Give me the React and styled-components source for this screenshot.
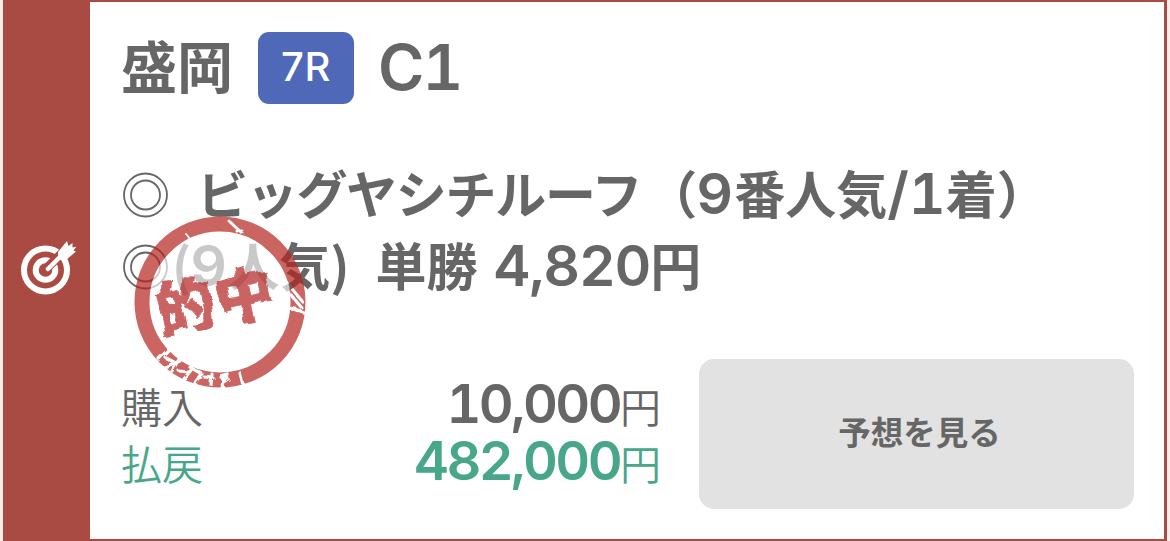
import React from 'react';

import styled, { createGlobalStyle, css } from 'styled-components';

const color = {
    red: '#a94b42',
    blue: '#4f69b8',
    green: '#48a78b',
    text: '#666',
    button: '#e2e2e2',
};

const GlobalStyle = createGlobalStyle`
    * {
        box-sizing: border-box;
    }
    body {
        margin: 0;
        background: #fbeeea;
        overflow: hidden;
        font-family: 'Noto Sans CJK JP', sans-serif;
        color: ${color.text};
    }
`;

const Card = styled.article`
    display: flex;
    width: 1164px;
    height: 541px;
    margin-left: 3px;
    background: #fff;
    border: solid ${color.red};
    border-width: 2px 3px 2px 0;
`;

const Side = styled.div`
    display: flex;
    align-items: center;
    justify-content: center;
    flex: none;
    width: 87px;
    padding: 0 0 7px 2px;
    background: ${color.red};
`;

const Body = styled.div`
    flex: 1;
    padding: 30px 30px 0 31px;
`;

const Title = styled.h2`
    display: flex;
    align-items: center;
    height: 72px;
    margin: 0 0 55px;
    font-size: 56px;
    line-height: 66px;
    font-weight: 700;
`;

const Place = styled.span`
    width: 137px;
    padding-bottom: 9px;
`;

const RaceNo = styled.span`
    width: 96px;
    height: 72px;
    margin-right: 24px;
    border-radius: 11px;
    background: ${color.blue};
    color: #fff;
    font-family: Inter, sans-serif;
    font-size: 40px;
    font-weight: 500;
    line-height: 70px;
    text-align: center;
    letter-spacing: 0.5px;
`;

const latin = css`
    font-family: Inter, 'Noto Sans CJK JP', sans-serif;
    font-weight: 600;
    font-variant-numeric: tabular-nums;
`;

const RaceClass = styled.span`
    ${latin}
    font-size: 63px;
    letter-spacing: -2px;
    padding-bottom: 2px;
`;

const Line = styled.div`
    position: relative;
    display: flex;
    align-items: baseline;
    height: 72px;
    font-size: 51px;
    font-weight: 700;
    line-height: 67px;
    white-space: nowrap;
`;

const Mark = styled.svg`
    align-self: center;
    flex: none;
    width: 47px;
    height: 46px;
`;

const Text = styled.span`
    margin-left: ${props => props.$gap || 0}px;
    letter-spacing: ${props => props.$spacing || 0}px;
`;

const Num = styled.span`
    ${latin}
    font-size: ${props => props.$size || 57}px;
    margin-left: ${props => props.$gap || 0}px;
    letter-spacing: ${props => props.$spacing || 0}px;
`;

const Stamp = styled.svg`
    position: absolute;
    left: 10px;
    top: -18px;
    width: 178px;
    height: 178px;
    font-family: 'Noto Sans CJK JP', sans-serif;
    font-weight: 900;
`;

const Footer = styled.div`
    display: flex;
    justify-content: space-between;
    margin-top: 56px;
`;

const Amounts = styled.dl`
    width: 540px;
    margin: 16px 0 0;
`;

const Amount = styled.div`
    display: flex;
    align-items: baseline;
    justify-content: space-between;
    height: 57px;
    line-height: 57px;
    font-size: 41px;
    font-weight: 350;
    color: ${props => (props.$win ? color.green : color.text)};
`;

const Value = styled.dd`
    margin: 0;
`;

const Button = styled.button`
    width: 435px;
    height: 150px;
    padding: 0 0 8px 6px;
    border: 0;
    border-radius: 15px;
    background: ${color.button};
    color: ${color.text};
    font: 700 32.5px 'Noto Sans CJK JP', sans-serif;
`;

const DoubleCircle = () => (
    <Mark viewBox="0 0 47 46" fill="none" stroke={color.text} strokeWidth="1.8">
        <circle cx="24.5" cy="23" r="21.5" />
        <circle cx="24.5" cy="23" r="14.5" />
    </Mark>
);

const TargetIcon = () => (
    <svg width="56" height="56" viewBox="0 0 56 56" fill="none">
        <circle cx="25.5" cy="31" r="21.5" stroke="#fff" strokeWidth="6" />
        <circle cx="25.5" cy="31" r="9.8" stroke="#fff" strokeWidth="6" />
        <path d="M28 28 48 8" stroke={color.red} strokeWidth="9" />
        <path d="M28 30 44 14" stroke="#fff" strokeWidth="4.5" strokeLinecap="round" />
        <path d="M38 13 47 2l1.5 5 4-3 0 4.5 4-1-3 4 2.500 1-10 8.500-8 0z" fill="#fff" />
    </svg>
);

const HitStamp = () => (
    <Stamp viewBox="0 0 178 178">
        <defs>
            <filter id="rough" x="-5%" y="-5%" width="110%" height="110%">
                <feTurbulence type="fractalNoise" baseFrequency="0.12" numOctaves="2" seed="4" />
                <feDisplacementMap in="SourceGraphic" scale="5" />
            </filter>
            <filter id="brush" x="-10%" y="-10%" width="120%" height="120%">
                <feTurbulence type="fractalNoise" baseFrequency="0.07" numOctaves="1" seed="9" />
                <feDisplacementMap in="SourceGraphic" scale="9" xChannelSelector="R" yChannelSelector="G" />
            </filter>
            <mask id="scratches">
                <rect width="178" height="178" fill="#fff" />
                <g stroke="#000" strokeLinecap="round" filter="url(#rough)">
                    <path d="M98 8l14 13M106 18l5 0" strokeWidth="3" />
                    <path d="M55 21l4 5" strokeWidth="2" />
                    <path d="M156 70l15 18M157 94l16 6M159 81l12 14M157 95l8 1" strokeWidth="3.2" />
                    <path d="M28 146l12-12M33 154l16-6M41 158l9-15M53 166l8-10M59 154l12 7M64 170l6-9M80 172l1-11M89 163l7-2 1 5-6 4 1 6M109 160l3 12M73 164l9 1M35 145l8 4M48 158l9 1" strokeWidth="3.2" />
                </g>
            </mask>
        </defs>
        <circle cx="89" cy="89" r="71" fill="#fff" fillOpacity="0.65" />
        <g opacity="0.7">
            <circle cx="89" cy="89" r="78" fill="none" stroke="#b52420" strokeWidth="15" mask="url(#scratches)" />
            <g fill="#b52420" stroke="#b52420" strokeWidth="0.8" filter="url(#brush)">
                <text x="30" y="121" fontSize="59" transform="rotate(-12 30 121)">的</text>
                <text x="89" y="109" fontSize="59" transform="rotate(-12 89 109)">中</text>
            </g>
        </g>
    </Stamp>
);

const AmountRow = ({ label, value, win }) => (
    <Amount $win={win}>
        <dt>{label}</dt>
        <Value><Num $size={54} $spacing={-2.6}>{value}</Num>円</Value>
    </Amount>
);

export default () => {
    return <>
        <GlobalStyle />
        <Card>
            <Side><TargetIcon /></Side>
            <Body>
                <Title>
                    <Place>盛岡</Place>
                    <RaceNo>7R</RaceNo>
                    <RaceClass>C1</RaceClass>
                </Title>
                <Line>
                    <DoubleCircle />
                    <Text $gap={29} $spacing={-1.3}>ビッグヤシチルーフ</Text>
                    <Text $gap={5}>（</Text>
                    <Num $gap={-1}>9</Num>
                    <Text $gap={1}>番人気</Text>
                    <Num>/</Num>
                    <Num>1</Num>
                    <Text>着）</Text>
                </Line>
                <Line>
                    <DoubleCircle />
                    <Text $gap={4}>(</Text>
                    <Num $gap={-1} $spacing={-1}>9</Num>
                    <Text $gap={2}>人気)</Text>
                    <Text $gap={26}>単勝</Text>
                    <Num $gap={16} $spacing={-1.2}>4,820</Num>
                    <Text>円</Text>
                    <HitStamp />
                </Line>
                <Footer>
                    <Amounts>
                        <AmountRow label="購入" value="10,000" />
                        <AmountRow label="払戻" value="482,000" win />
                    </Amounts>
                    <Button>予想を見る</Button>
                </Footer>
            </Body>
        </Card>
    </>
}
